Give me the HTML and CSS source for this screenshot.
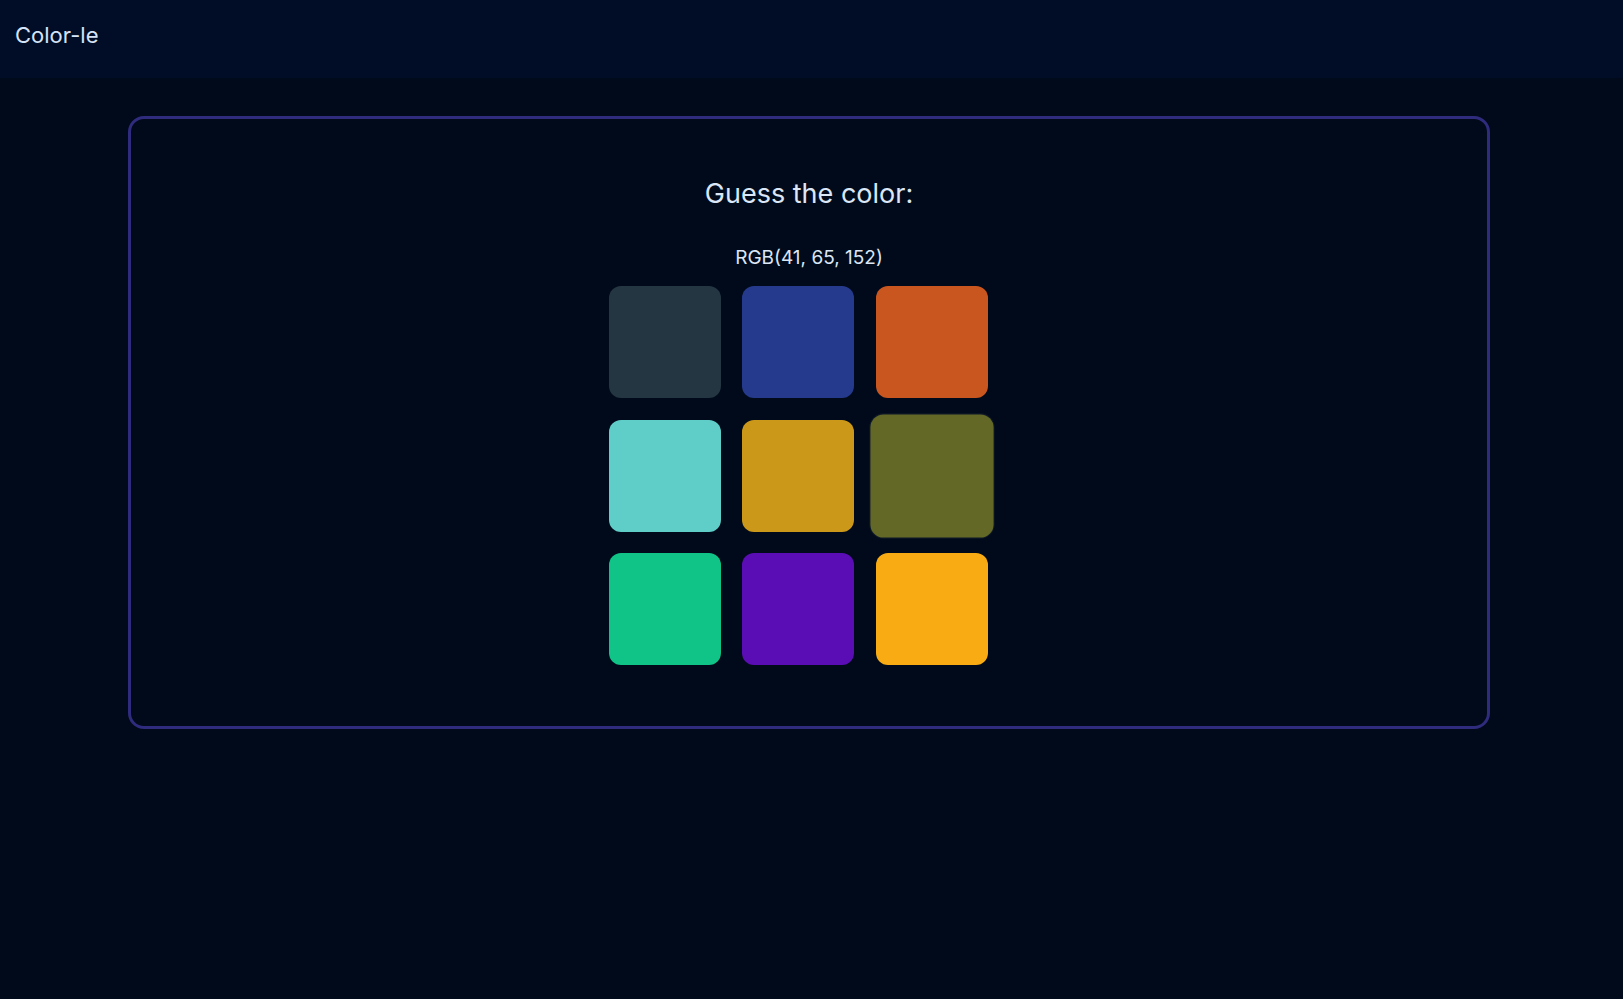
FILE: index.html
```html
<!DOCTYPE html>
<html lang="en">
<head>
<meta charset="utf-8">
<title>Color-le</title>
<link rel="stylesheet" href="styles.css">
</head>
<body>
<header class="topbar">
  <span class="brand">Color-le</span>
</header>
<main class="page">
  <section class="card">
    <h1 class="title">Guess the color:</h1>
    <p class="target">RGB(41, 65, 152)</p>
    <div class="grid">
      <button class="swatch" style="background:#243642"></button>
      <button class="swatch" style="background:#253a8c"></button>
      <button class="swatch" style="background:#ca561f"></button>
      <button class="swatch" style="background:#5fcdc8"></button>
      <button class="swatch" style="background:#cc981a"></button>
      <button class="swatch hovered" style="background:#636827"></button>
      <button class="swatch" style="background:#10c386"></button>
      <button class="swatch" style="background:#5a0db5"></button>
      <button class="swatch" style="background:#f8ab12"></button>
    </div>
  </section>
</main>
</body>
</html>
```

FILE: styles.css
```css
* { box-sizing: border-box; }
html, body {
  margin: 0;
  padding: 0;
  background: #010a1a;
  font-family: Inter, "Noto Sans", "Liberation Sans", sans-serif;
  color: #dbe6f7;
}
body { min-height: 999px; }
.topbar {
  height: 78px;
  background: #010d26;
  display: flex;
  align-items: center;
  padding: 0 15px 8px;
}
.brand {
  font-size: 22px;
  line-height: 1;
  color: #d6e3f7;
}
.page {
  padding: 38px 5px 0 0;
  display: flex;
  justify-content: center;
}
.card {
  width: 1362px;
  border: 3px solid #2f2b7d;
  border-radius: 16px;
  display: flex;
  flex-direction: column;
  align-items: center;
  padding: 58px 0 61px;
}
.title {
  margin: 0;
  font-size: 27px;
  font-weight: 400;
  line-height: 34px;
  color: #dbe6f7;
}
.target {
  margin: 35px 0 0;
  font-size: 19px;
  line-height: 24px;
  color: #dbe6f7;
}
.grid {
  margin-top: 16px;
  width: 400px;
  display: grid;
  grid-template-columns: repeat(3, 1fr);
  row-gap: 21.5px;
}
.swatch {
  width: 112px;
  height: 112px;
  border: none;
  border-radius: 12px;
  padding: 0;
  cursor: pointer;
}
.swatch.hovered {
  transform: scale(1.1);
  box-shadow: 0 0 0 1px rgba(255, 255, 255, 0.06);
}
```
